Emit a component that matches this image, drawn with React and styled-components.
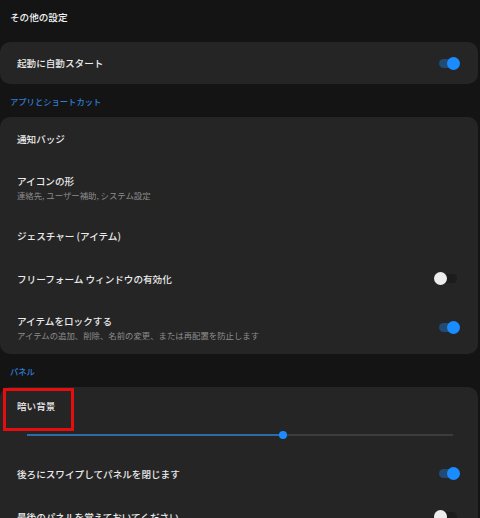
import styled, { createGlobalStyle } from 'styled-components';

const GlobalStyle = createGlobalStyle`
  html, body {
    margin: 0;
    padding: 0;
    background: #141414;
  }
  body {
    font-family: "Noto Sans CJK JP", "Noto Sans", sans-serif;
    color: #ececec;
  }
`;

const Page = styled.div`
  width: 480px;
  height: 518px;
  overflow: hidden;
  background: #141414;
`;

const PageTitle = styled.div`
  height: 33px;
  padding: 0 10px;
  display: flex;
  align-items: center;
  font-size: 9.6px;
  font-weight: 500;
  color: #f2f2f2;
`;

const Gap = styled.div`
  height: ${props => props.h}px;
`;

const SectionHeader = styled.div`
  height: 33px;
  padding: 0 10px;
  display: flex;
  align-items: center;
  font-size: 8.3px;
  font-weight: 500;
  color: #2f7fd6;
`;

const Card = styled.div`
  position: relative;
  width: 478px;
  background: #252525;
  border-radius: 10px;
`;

const Row = styled.div`
  height: ${props => props.h || 43}px;
  padding: 0 21px 0 17px;
  display: flex;
  align-items: center;
  justify-content: space-between;
`;

const Texts = styled.div`
  display: flex;
  flex-direction: column;
  gap: 3px;
`;

const Label = styled.div`
  font-size: 9.6px;
  font-weight: 500;
  color: #ebebeb;
  line-height: 12px;
`;

const Sub = styled.div`
  font-size: 8.4px;
  color: #8c8c8c;
  line-height: 10px;
`;

const Track = styled.div`
  position: relative;
  width: 18px;
  height: 9px;
  border-radius: 5px;
  background: ${props => (props.on ? '#214a74' : '#1c1c1c')};
`;

const Knob = styled.div`
  position: absolute;
  top: 50%;
  width: 13px;
  height: 13px;
  margin-top: -6.5px;
  border-radius: 50%;
  background: ${props => (props.on ? '#1a8cff' : '#ededed')};
  left: ${props => (props.on ? '8px' : '-5px')};
`;

const Marker = styled.div`
  position: absolute;
  left: 3px;
  top: 1px;
  width: 71px;
  height: 43px;
  box-sizing: border-box;
  border: 3px solid #e50d0d;
`;

const SliderRow = styled.div`
  height: 20px;
  padding: 0 25px 0 27px;
  display: flex;
  align-items: center;
`;

const SliderTrack = styled.div`
  position: relative;
  flex: 1;
  height: 1.5px;
  background: #3c3c3c;
`;

const SliderFill = styled.div`
  position: absolute;
  left: 0;
  top: 0;
  bottom: 0;
  background: #2c6aa8;
`;

const SliderThumb = styled.div`
  position: absolute;
  top: 50%;
  width: 8px;
  height: 8px;
  margin: -4px 0 0 -4px;
  border-radius: 50%;
  background: #1a8cff;
`;

const Toggle = ({ on }) => (
  <Track on={on}>
    <Knob on={on} />
  </Track>
);

const Item = ({ label, sub, toggle }) => (
  <Row h={sub ? 54 : 43}>
    <Texts>
      <Label>{label}</Label>
      {sub && <Sub>{sub}</Sub>}
    </Texts>
    {toggle !== undefined && <Toggle on={toggle} />}
  </Row>
);

const App = () => {
  const dim = 0.6;
  return (
    <Page>
      <GlobalStyle />
      <PageTitle>その他の設定</PageTitle>
      <Gap h={9} />
      <Card>
        <Row h={42}>
          <Label>起動に自動スタート</Label>
          <Toggle on={true} />
        </Row>
      </Card>
      <SectionHeader>アプリとショートカット</SectionHeader>
      <Card>
        <Item label="通知バッジ" />
        <Item label="アイコンの形" sub="連絡先, ユーザー補助, システム設定" />
        <Item label="ジェスチャー (アイテム)" />
        <Item label="フリーフォーム ウィンドウの有効化" toggle={false} />
        <Item
          label="アイテムをロックする"
          sub="アイテムの追加、削除、名前の変更、または再配置を防止します"
          toggle={true} />
      </Card>
      <SectionHeader>パネル</SectionHeader>
      <Card>
        <Row h={38}>
          <Label>暗い背景</Label>
        </Row>
        <SliderRow>
          <SliderTrack>
            <SliderFill style={{ width: `${dim * 100}%` }} />
            <SliderThumb style={{ left: `${dim * 100}%` }} />
          </SliderTrack>
        </SliderRow>
        <Gap h={7} />
        <Item label="後ろにスワイプしてパネルを閉じます" toggle={true} />
        <Item label="最後のパネルを覚えておいてください" toggle={false} />
        <Marker />
      </Card>
    </Page>
  );
};

export default App;
